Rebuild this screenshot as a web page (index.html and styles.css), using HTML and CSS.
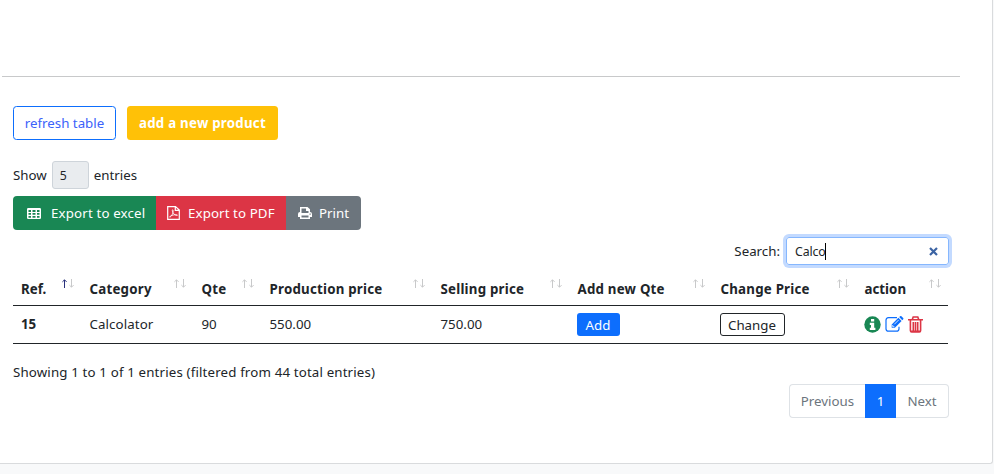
FILE: index.html
```html
<!DOCTYPE html>
<html lang="en">
<head>
<meta charset="utf-8">
<title>Products</title>
<link rel="stylesheet" href="styles.css">
</head>
<body>
<svg width="0" height="0" class="defs">
  <symbol id="up" viewBox="0 0 5 9"><path d="M2.500 9V1M.4 2.900 2.500.8l2.100 2.100" fill="none" stroke="currentColor"/></symbol>
  <symbol id="down" viewBox="0 0 5 9"><path d="M2.500 0v8M.4 6.100l2.100 2.100 2.100-2.100" fill="none" stroke="currentColor"/></symbol>
</svg>
<main class="card">
  <hr class="divider">
  <section class="content">
    <div class="toolbar">
      <button class="btn btn-outline">refresh table</button>
      <button class="btn btn-warning">add a new product</button>
    </div>
    <div class="length"><span>Show</span><span class="select">5</span><span>entries</span></div>
    <div class="exports">
      <button class="export excel">
        <svg width="14" height="11" viewBox="0 0 14 11"><path fill="currentColor" fill-rule="evenodd" d="M1.2 0h11.6Q14 0 14 1.200v8.600q0 1.200-1.200 1.200H1.200Q0 11 0 9.800V1.200Q0 0 1.200 0ZM1.500 2v2H4V2Zm4 0v2h3V2Zm4.500 0v2h2.500V2ZM1.500 5v1.800H4V5Zm4 0v1.800h3V5Zm4.500 0v1.800h2.500V5ZM1.500 8v1.800H4V8Zm4 0v1.800h3V8Zm4.500 0v1.800h2.500V8Z"/></svg>
        <span>Export to excel</span>
      </button>
      <button class="export pdf">
        <svg width="13" height="14" viewBox="0 0 13 14" fill="none" stroke="currentColor"><path d="M1 .6h7.500L12.300 4v9.400H.7V.6ZM8.300.8v3.500h3.800" stroke-width="1.200"/><path d="M3 11.200c2-1 3.500-5 3.100-7.100-.1-.7-1-.4-.8.5.5 2.700 2.100 4.600 4.700 4.900.8 0 .5-.8-.5-.8-2.300 0-4.500.5-6.300 1.500-.8.5-.7 1.200-.2 1Z" stroke-width=".8"/></svg>
        <span>Export to PDF</span>
      </button>
      <button class="export print">
        <svg width="14" height="12" viewBox="0 0 14 12"><path fill="currentColor" fill-rule="evenodd" d="M2 0h7.500L12 2.300V5q2 0 2 2v3h-2v2H2v-2H0V7q0-2 2-2Zm1.500 1.500V6h7V4H8V1.500ZM3.500 8.500v2h7v-2Zm8-2v1.200h1.200V6.500Z"/></svg>
        <span>Print</span>
      </button>
    </div>
    <div class="filter">
      <label>Search:</label>
      <div class="search"><span class="query">Calco</span><i class="caret"></i>
        <svg class="clear" width="9" height="9" viewBox="0 0 9 9"><path d="m1 1 7 7M8 1 1 8" stroke="#3c64a4" stroke-width="2.200"/></svg>
      </div>
    </div>
    <table>
      <colgroup><col class="c-ref"><col class="c-cat"><col class="c-qte"><col class="c-prod"><col class="c-sell"><col class="c-add"><col class="c-change"><col class="c-action"></colgroup>
      <thead><tr>
        <th>Ref.<span class="sort"><svg class="on"><use href="#up"/></svg><svg><use href="#down"/></svg></span></th>
        <th>Category<span class="sort"><svg><use href="#up"/></svg><svg><use href="#down"/></svg></span></th>
        <th>Qte<span class="sort"><svg><use href="#up"/></svg><svg><use href="#down"/></svg></span></th>
        <th>Production price<span class="sort"><svg><use href="#up"/></svg><svg><use href="#down"/></svg></span></th>
        <th>Selling price<span class="sort"><svg><use href="#up"/></svg><svg><use href="#down"/></svg></span></th>
        <th>Add new Qte<span class="sort"><svg><use href="#up"/></svg><svg><use href="#down"/></svg></span></th>
        <th>Change Price<span class="sort"><svg><use href="#up"/></svg><svg><use href="#down"/></svg></span></th>
        <th class="flat">action<span class="sort"><svg><use href="#up"/></svg><svg><use href="#down"/></svg></span></th>
      </tr></thead>
      <tbody><tr>
        <td><b>15</b></td><td class="category">Calcolator</td><td>90</td><td>550.00</td><td>750.00</td>
        <td><button class="small add">Add</button></td>
        <td><button class="small change">Change</button></td>
        <td><div class="actions">
          <svg width="17" height="17" viewBox="0 0 17 17"><circle cx="8.500" cy="8.500" r="8.200" fill="#198754"/><path fill="#fff" d="M7 3h3.200v2.500H7ZM5.800 6.800h4.400v5h1.200V14H5.800v-2.200H7V9H5.800Z"/></svg>
          <svg class="edit" width="19" height="17" viewBox="0 0 19 17"><path d="M12 1.700H3.500Q1 1.700 1 4.200v8.500q0 2.500 2.500 2.500h8q2.500 0 2.500-2.500v-2" fill="none" stroke="#0d6efd" stroke-width="1.200"/><path d="m6.700 8.500 6.700-6.700 3.200 3.200-6.700 6.700H6.700ZM14.200 1.100l1-.9q.6-.5 1.200 0L18.200 2q.5.600 0 1.200l-.9 1Z" fill="#0d6efd"/><path d="M7.700 9v1.700h1.700M9.300 8.300l4.300-4.300" fill="none" stroke="#fff" stroke-width=".8"/></svg>
          <svg width="15" height="17" viewBox="0 0 15 17" fill="none" stroke="#dc3545"><path d="M0 3.800h15M4.300 3.500 5.200 1h4.600l.9 2.500" stroke-width="1.600"/><path d="M2.400 4v10.500q0 1.500 1.200 1.500h7.800q1.200 0 1.200-1.500V4M5.300 6v8.500M7.500 6v8.500M9.700 6v8.500M3 15.200h9" stroke-width="1.600"/></svg>
        </div></td>
      </tr></tbody>
    </table>
    <div class="info">Showing 1 to 1 of 1 entries (filtered from 44 total entries)</div>
    <nav class="pages"><span class="prev">Previous</span><span class="current">1</span><span class="next">Next</span></nav>
  </section>
</main>
</body>
</html>
```
FILE: styles.css
```css
* { box-sizing: border-box; }
body { margin: 0; height: 474px; overflow: hidden; background: #f8f9fa; color: #212529; font: 13.3px/20px "Noto Sans", "Open Sans", sans-serif; }
button { font: inherit; padding: 0; margin: 0; border: 0; white-space: nowrap; }
.defs { position: absolute; }
.card { width: 993px; height: 464px; background: #fff; border-right: 1px solid #d9dbdd; border-bottom: 1px solid #d9dbdd; border-bottom-right-radius: 3px; padding-top: 76px; }
.divider { height: 1px; width: 958px; border: 0; margin: 0 0 0 2px; background: #c8c9ca; }
.content { width: 936px; margin: 29px 0 0 13px; }
.toolbar { display: flex; gap: 11px; }
.btn { height: 34px; border-radius: 3.5px; }
.btn-outline { width: 103px; border: 1px solid #0d6efd; background: #fff; color: #3b62fa; }
.btn-warning { width: 151px; background: #ffc107; color: #fff; font-weight: 700; letter-spacing: .24px; }
.length { display: flex; align-items: center; gap: 5px; height: 28px; margin-top: 21px; }
.select { width: 37px; height: 28px; padding: 4px 7px; border: 1px solid #ced4da; border-radius: 3px; background: #e9ecef; font-size: 12.3px; }
.exports { display: flex; height: 34px; margin-top: 7px; color: #fff; }
.export { color: #fff; display: flex; align-items: center; }
.excel { width: 143px; padding-left: 14px; gap: 10px; background: #198754; border-radius: 4px 0 0 4px; letter-spacing: .15px; }
.pdf { width: 130px; padding-left: 11px; gap: 8px; background: #dc3545; letter-spacing: .1px; }
.print { width: 75px; padding-left: 12px; gap: 7px; background: #6c757d; border-radius: 0 4px 4px 0; }
.filter { display: flex; justify-content: flex-end; align-items: center; gap: 6px; height: 28px; margin-top: 7px; }
.search { display: flex; align-items: center; width: 163px; height: 28px; padding: 0 10px 0 8px; border: 1px solid #86b7fe; border-radius: 3px; box-shadow: 0 0 0 3px #c3daff; font-size: 12.3px; }
.query { width: 30px; padding-top: 1px; letter-spacing: -.1px; }
.caret { width: 1px; height: 17px; background: #000; }
.clear { margin-left: auto; }
table { width: 935px; margin-top: 8px; table-layout: fixed; border-collapse: separate; border-spacing: 0; }
.c-ref { width: 68.5px; } .c-cat { width: 112px; } .c-qte { width: 68px; } .c-prod { width: 171px; } .c-sell { width: 137px; } .c-add { width: 143px; } .c-change { width: 144px; }
th, td { padding: 0 0 0 8px; text-align: left; white-space: nowrap; border-bottom: 1px solid #212529; }
th { position: relative; height: 33px; letter-spacing: .22px; }
th:first-child, .flat { letter-spacing: 0; }
td { height: 38px; padding-bottom: 1px; }
.category { letter-spacing: .1px; }
.sort { position: absolute; top: 6px; right: 7.5px; display: flex; gap: 2px; color: #c8c9ca; }
.sort svg { display: block; width: 5px; height: 9px; }
.sort .on { color: #29317c; }
.small { display: block; height: 23px; border-radius: 3px; line-height: 22px; margin: 1px 0 0 -1px; }
.add { width: 43px; background: #0d6efd; color: #fff; }
.change { width: 65px; background: #fff; border: 1px solid #212529; color: #212529; }
.actions { display: flex; align-items: center; margin-left: -1px; }
.edit { margin: 0 4px; }
.info { margin-top: 18px; height: 20px; letter-spacing: .15px; }
.pages { display: flex; justify-content: flex-end; height: 34px; margin-top: 2px; color: #6c757d; }
.pages span { border: 1px solid #dee2e6; line-height: 32px; text-align: center; }
.pages .prev { width: 76px; border-right: 0; border-radius: 4px 0 0 4px; }
.pages .current { width: 31px; background: #0d6efd; border-color: #0d6efd; color: #fff; }
.pages .next { width: 53px; border-left: 0; border-radius: 0 4px 4px 0; }
```
